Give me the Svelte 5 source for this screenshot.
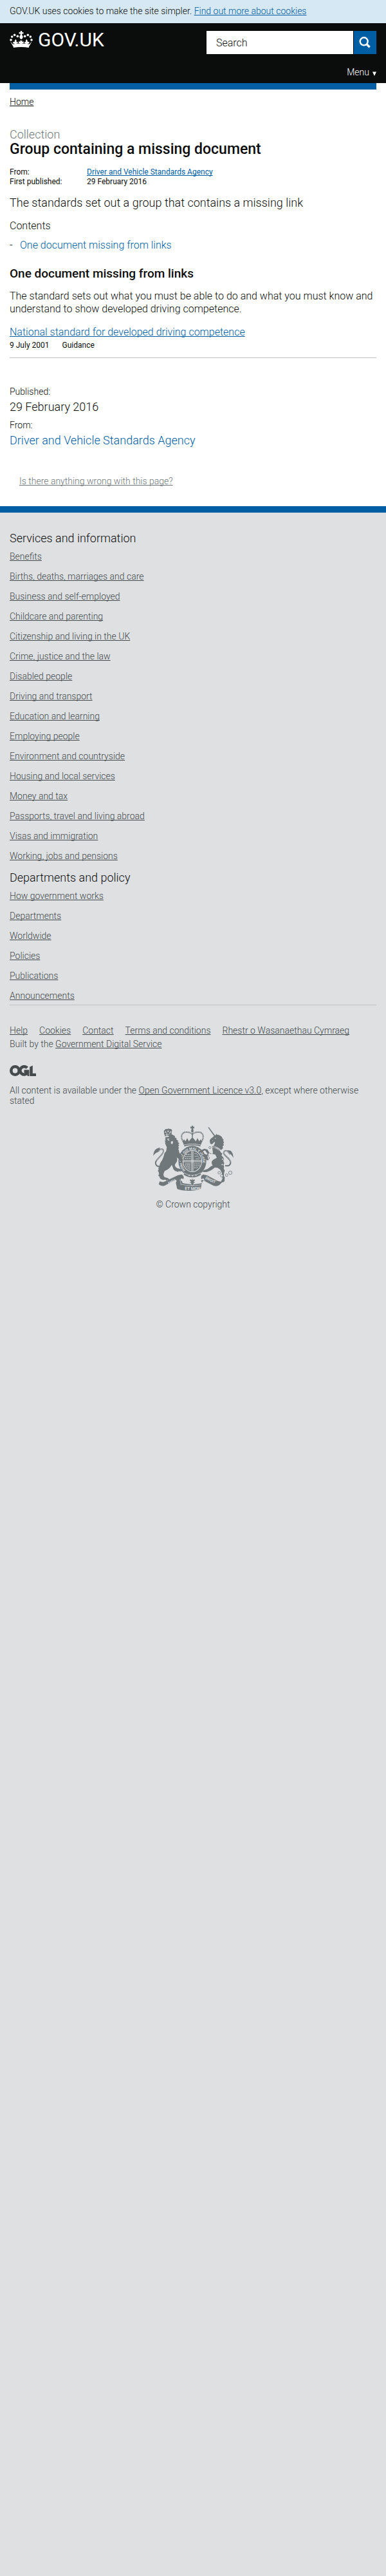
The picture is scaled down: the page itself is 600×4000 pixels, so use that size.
<script>
  const services = [
    'Benefits',
    'Births, deaths, marriages and care',
    'Business and self-employed',
    'Childcare and parenting',
    'Citizenship and living in the UK',
    'Crime, justice and the law',
    'Disabled people',
    'Driving and transport',
    'Education and learning',
    'Employing people',
    'Environment and countryside',
    'Housing and local services',
    'Money and tax',
    'Passports, travel and living abroad',
    'Visas and immigration',
    'Working, jobs and pensions'
  ];
  const departments = [
    'How government works',
    'Departments',
    'Worldwide',
    'Policies',
    'Publications',
    'Announcements'
  ];
  const meta = ['Help', 'Cookies', 'Contact', 'Terms and conditions', 'Rhestr o Wasanaethau Cymraeg'];
  let query = $state('');
</script>

<div class="cookies">
  <p>GOV.UK uses cookies to make the site simpler. <a href="#cookies">Find out more about cookies</a></p>
</div>

<header>
  <div class="bar">
    <a class="logo" href="#home">
      <svg class="crown" viewBox="45 144 108 78" aria-hidden="true">
        <g fill="#fff">
          <circle cx="51" cy="186" r="5.4" /><circle cx="56" cy="171" r="5.4" />
          <circle cx="68" cy="163" r="5.4" /><circle cx="82" cy="169" r="5.4" />
          <circle cx="147" cy="186" r="5.4" /><circle cx="142" cy="171" r="5.4" />
          <circle cx="130" cy="163" r="5.4" /><circle cx="116" cy="169" r="5.4" />
          <path d="M95 144h8l-1 7 7-2v9l-7-1 1 7c4 3 5 8 3 12l-4 6h-6l-4-6c-2-4-1-9 3-12l1-7-7 1v-9l7 2z" />
          <path d="M59 206c25-5 53-5 79 0l-4 16c-23-4-48-4-71 0z" />
          <path d="M48 193l7 7c3 4 6 7 10 8l-4 8zM149 193l-7 7c-3 4-6 7-10 8l4 8z" />
          <path d="M93 189h11l-2 6 8-2v9l-7-1 2 8H92l2-8-7 1v-9l8 2z" />
          <path d="M73 182l5 9-3 5 8-1-1 7-6 1 1 7h-9l1-7c-5 1-8-1-9-6l4-3 5 2-1-5zM124 182l-5 9 3 5-8-1 1 7 6 1-1 7h9l-1-7c5 1 8-1 9-6l-4-3-5 2 1-5z" />
        </g>
      </svg>
      <span>GOV.UK</span>
    </a>
    <form role="search" onsubmit={(e) => e.preventDefault()}>
      <input type="search" aria-label="Search" placeholder="Search" bind:value={query} />
      <button type="submit" aria-label="Search">
        <svg viewBox="0 0 35 36" aria-hidden="true">
          <circle cx="15.7" cy="16.3" r="6" fill="none" stroke="#fff" stroke-width="2.4" />
          <path d="M20 20.6l4.6 4.6" stroke="#fff" stroke-width="3.4" />
        </svg>
      </button>
    </form>
  </div>
  <a class="menu" href="#menu">Menu
    <svg viewBox="0 0 6 7" aria-hidden="true"><path d="M0 .5h6L3 7z" fill="#fff" /></svg>
  </a>
</header>

<main>
  <div class="stripe"></div>
  <nav aria-label="Breadcrumb"><a href="#home">Home</a></nav>

  <p class="kind">Collection</p>
  <h1>Group containing a missing document</h1>
  <dl class="facts">
    <dt>From:</dt>
    <dd><a href="#dvsa">Driver and Vehicle Standards Agency</a></dd>
    <dt>First published:</dt>
    <dd>29 February 2016</dd>
  </dl>
  <p class="lead">The standards set out a group that contains a missing link</p>

  <h2 class="contents">Contents</h2>
  <ul class="toc">
    <li><a href="#group">One document missing from links</a></li>
  </ul>

  <h2 class="group" id="group">One document missing from links</h2>
  <p class="body">The standard sets out what you must be able to do and what you must know and understand to show developed driving competence.</p>
  <div class="doc">
    <a href="#standard">National standard for developed driving competence</a>
    <p><span>9 July 2001</span><span>Guidance</span></p>
  </div>

  <dl class="published">
    <dt>Published:</dt>
    <dd>29 February 2016</dd>
    <dt>From:</dt>
    <dd><a href="#dvsa">Driver and Vehicle Standards Agency</a></dd>
  </dl>

  <p class="report"><a href="#report">Is there anything wrong with this page?</a></p>
</main>

<footer>
  <section class="links">
    <h2>Services and information</h2>
    <ul>
      {#each services as item}<li><a href="#services">{item}</a></li>{/each}
    </ul>
    <h2>Departments and policy</h2>
    <ul>
      {#each departments as item}<li><a href="#departments">{item}</a></li>{/each}
    </ul>
  </section>

  <ul class="meta">
    {#each meta as item}<li><a href="#meta">{item}</a></li>{/each}
  </ul>
  <p class="built">Built by the <a href="#gds">Government Digital Service</a></p>

  <svg class="ogl" viewBox="0 0 41 17" role="img" aria-label="Open Government Licence">
    <g fill="none" stroke="#454a4c" stroke-width="4.6">
      <circle cx="8.5" cy="8.5" r="6.2" />
      <path d="M27.2 4.3A6.2 6.2 0 1 0 28 11.2V9.6h-5.5" />
    </g>
    <path fill="#454a4c" d="M25.5 10h4.8v7h-2.4zM31.2 2.8L35.8.6v12.2H41V17h-9.8z" />
  </svg>
  <p class="licence">All content is available under the <a href="#ogl">Open Government Licence v3.0</a>, except where otherwise stated</p>

  <a class="copyright" href="#copyright">
    <svg viewBox="54 54 375 306" aria-hidden="true">
      <defs>
        <path id="ring" d="M206 263A48 55 0 1 1 268 263" />
        <path id="dieu" d="M122 331Q155 321 182 292" />
        <path id="mon" d="M186 351Q237 357 290 351" />
        <path id="droit" d="M290 295Q318 317 362 329" />
      </defs>
      <g fill="#6f777b">
        <!-- crown over the shield -->
        <path d="M233 54h8l-1 6 6-2v9l-6-1 2 9h-10l2-9-6 1v-9l6 2z" />
        <circle cx="237" cy="79" r="6" />
        <path d="M192 129l6-12 7 10 8-15 8 15 8-11 8-8 8 8 8 11 8-15 8 15 7-10 6 12-5 14c-24-7-56-7-80 0z" />
        <path d="M199 145c24-6 52-6 76 0v6c-24-7-52-7-76 0z" />
        <!-- shield -->
        <ellipse cx="237" cy="219" rx="65" ry="71" />
      </g>
      <g fill="none" stroke="#6f777b" stroke-width="6" stroke-dasharray="5 2">
        <path d="M194 128C180 106 187 85 206 84c14-1 24 3 29 9M280 128c14-22 7-43-12-44-14-1-24 3-29 9" />
        <path d="M237 86v34" />
      </g>
      <ellipse cx="237" cy="219" rx="45" ry="51" fill="#dee0e2" />
      <ellipse cx="237" cy="219" rx="42" ry="48" fill="#6f777b" />
      <g stroke="#dee0e2" fill="none" stroke-width="3">
        <path d="M234 172v94M240 172v94M195 216h84M195 222h84" />
        <path stroke-dasharray="7 3" d="M207 188h23M203 197h27M202 206h28M245 232h30M245 241h27M245 250h20" />
        <path d="M246 184h10l9 9M247 196h14l12 10M252 208h18" stroke-width="2" />
        <path d="M203 231h26M205 232c0 14 8 22 23 27M213 232v15M219 232v20M225 232v24" stroke-width="2" />
      </g>
      <g fill="#dee0e2" font-family="Roboto, sans-serif" font-weight="700">
        <text font-size="16"><textPath href="#ring" startOffset="2">HONI SOIT QUI MAL Y PENSE</textPath></text>
      </g>
      <path d="M200 274c22 15 50 15 74 0l5 8c-24 18-60 18-84 0z" fill="#6f777b" stroke="#dee0e2" stroke-width="2" />
      <g fill="#dee0e2"><circle cx="222" cy="285" r="3" /><circle cx="238" cy="287" r="3" /><circle cx="254" cy="284" r="3" /></g>

      <!-- lion -->
      <g fill="#6f777b">
        <path d="M107 106l3-5c10-7 22-9 34-6l4 3 8 4-1 6 9 5-2 5 10 7-4 4 9 7-6 4 5 6-5 5 4 8-4 3 3 7 2 10 5 8 8 5-5 4 6 6-2 5 8 8-7 1 4 8c-8-1-15-7-19-15l-10-7c4 10 3 18-4 26-5 6-6 12-1 18 4 5 12 8 20 9l9 3 2 9-9-3 2 6-9-5-3 4c-14-3-23-9-25-21l-5-12-8 12c-6 8-16 12-25 17l-4 9c-3 8-2 15 5 20l11 3 9 5-2 6-7-3-2 5-8-5-8 2c-10-2-18-6-18-15l-7-7 5-4-2-11-4-6 4-6-2-8 5-3c0-13 5-22 12-31 6-11 9-22 12-34l8-10 3-18-4-8-5-14 3 1-4-11 5 1-4-10 4 1-2-9 3-10-4-7 4-4c0-6-1-10-1-11z" />
        <path d="M55 194c0-15 5-27 15-33l15-6c2 10-2 18-10 23-9 2-14 8-20 16z" />
        <path d="M106 96l-2-19 6-5 3-3 8 1 4-3 6 2 8 1 3 6-2 20c-11-4-23-4-34 0z" />
      </g>
      <path d="M80 172c6-12 22-12 22 0 1 14-20 27-33 45-8 13-1 29 18 26" fill="none" stroke="#6f777b" stroke-width="6" />
      <path d="M80 172c6-12 22-12 22 0 1 14-20 27-33 45" fill="none" stroke="#dee0e2" stroke-width="1.6" />
      <g fill="#dee0e2">
        <path d="M109 104l11-5 10 4-5 3-9 1zM131 113l-6 5 7 6-9-2-3-7zM137 128l8-3 2 7-4 9-6-5z" />
        <circle cx="112" cy="83" r="3" /><circle cx="124" cy="80" r="3.2" /><circle cx="136" cy="83" r="3" />
        <path d="M113 90l5-4 3 4zM127 89l4-4 4 5z" />
      </g>

      <!-- unicorn -->
      <g fill="#6f777b">
        <path d="M310 62l4-1 28 37 2 8-6-4z" />
        <path d="M334 105l14-9-1-5 6 5c15 2 23 9 25 19l6 5-4 4 5 8-4 5 3 8-6 5 2 8-9 11-6-5c-10-9-20-11-28-10l-3-5 6-9 3-10-6 1-5 7c-3 4-9 3-12-2l-2-10c0-8 5-12 13-17z" />
        <path d="M329 148l34 18 8 14 6 3-4 10 8 8 3 10-3 6 5 13-4 4 3 11-2 9 5 8-3 12-1 15 4 5-1 18c-5 7-12 7-16 0l6-10-3-29-7-14-13-9-13-1c-11 11-26 18-39 21l-18-1 5-7 20-7 15-12 8-4c-9-12-5-24 7-29l12-7-7-15c-12-1-20-3-26-8l-8 7 5 6-9 2 8 11-3 9-9-1-3-9-14-9-2-8 8 1 3-4 9 4 5-3-4-6-8-11-11 5-5 8-5-6 4-9 14-6 15 4 6 11 7 10 12-2z" />
        <path d="M428 204c0-15-4-28-14-34l-12-2c0 9 4 14 9 18 7 1 12 8 17 18z" />
      </g>
      <path d="M412 187c-10-22-28-20-29-7-1 14 31 25 32 44 1 15-11 19-25 16" fill="none" stroke="#6f777b" stroke-width="6" />
      <path d="M412 187c-10-22-28-20-29-7-1 14 31 25 32 44" fill="none" stroke="#dee0e2" stroke-width="1.6" />
      <g fill="#dee0e2" stroke="#6f777b" stroke-width="2.4">
        <circle cx="319" cy="156" r="5" /><circle cx="312" cy="204" r="5" /><circle cx="379" cy="210" r="4.5" />
        <circle cx="376" cy="235" r="4" /><circle cx="362" cy="273" r="6" /><circle cx="374" cy="287" r="6" />
        <circle cx="397" cy="284" r="6" /><circle cx="414" cy="273" r="8" />
      </g>
      <path d="M330 147c14 3 28 10 42 20M328 154c14 2 26 9 40 19" fill="none" stroke="#dee0e2" stroke-width="2.5" stroke-dasharray="5 2" />
      <path d="M340 113l8-3-3 5zM330 122l4 2-3 2z" fill="#dee0e2" />

      <!-- motto scroll -->
      <g fill="#6f777b">
        <path d="M85 313c11 5 21 4 32-3l52-25 17-4c10 4 13 12 9 22l-8-4c-7 2-5 12 1 13l4 9c22 7 68 7 90 0l4-9c6-1 8-11 1-13l-8 4c-4-10-1-18 9-22l17 4 47 25c10 5 19 5 29 2l-17 17c-12 8-24 8-35 1l-46-24-6 4 5 9-6 29c-22 12-88 12-110 0l-6-28 4-10-5-4-44 23c-12 8-24 7-35-2z" />
        <path d="M231 333v-12h-6v-5h6l-7-8c3-5 8-5 10-1l3-10 3 10c2-4 7-4 10 1l-7 8h6v5h-6v12z" stroke="#dee0e2" stroke-width="1.5" />
      </g>
      <g fill="none" stroke="#dee0e2" stroke-width="2">
        <path d="M184 326c30 9 76 9 106 0M178 305c4 10 6 17 6 26M296 305c-5 10-6 17-6 26" />
      </g>
      <g fill="#dee0e2" font-family="Roboto, sans-serif" font-weight="700">
        <text font-size="18"><textPath href="#dieu" startOffset="5">DIEU</textPath></text>
        <text font-size="20"><textPath href="#mon" startOffset="16">ET MON</textPath></text>
        <text font-size="18"><textPath href="#droit" startOffset="8">DROIT</textPath></text>
      </g>
    </svg>
    <span>© Crown copyright</span>
  </a>
</footer>

<style>
  :global(body) {
    margin: 0;
    background: #dee0e2;
  }
  :global(#app) {
    font-family: Roboto, "Liberation Sans", sans-serif;
    font-weight: 300;
    color: #0b0c0c;
    font-size: 14px;
    line-height: 20px;
  }
  p, h1, h2, ul, dl, dd {
    margin: 0;
    padding: 0;
  }
  h2 { font-weight: 300; }
  ul { list-style: none; }
  a {
    color: #005ea5;
    text-decoration: underline;
    text-decoration-skip-ink: none;
  }

  .cookies {
    padding: 7px 15px 9px;
    background: #d5e8f3;
  }

  header {
    background: #0b0c0c;
    padding: 12px 15px 7px;
    display: flex;
    flex-direction: column;
    gap: 18px;
  }
  .bar {
    display: flex;
    justify-content: space-between;
    align-items: flex-start;
  }
  .logo {
    display: flex;
    gap: 8px;
    color: #fff;
    text-decoration: none;
    font-size: 30px;
    font-weight: 400;
    line-height: 28px;
  }
  .crown {
    width: 36px;
    height: 26px;
  }
  form {
    display: flex;
    gap: 1px;
    width: 264px;
  }
  input {
    flex: 1;
    min-width: 0;
    box-sizing: border-box;
    height: 36px;
    margin: 0;
    padding: 0 15px;
    border: 0;
    border-radius: 0;
    background: #fff;
    color: #0b0c0c;
    font: 300 16px Roboto, sans-serif;
    appearance: none;
  }
  input::placeholder { color: #0b0c0c; }
  button {
    width: 35px;
    height: 36px;
    padding: 0;
    border: 0;
    background: #005ea5;
  }
  button svg {
    display: block;
    width: 35px;
    height: 36px;
  }
  .menu {
    align-self: flex-end;
    display: flex;
    align-items: center;
    gap: 5px;
    color: #fff;
    text-decoration: none;
  }
  .menu svg {
    width: 6px;
    height: 7px;
    margin-top: 4px;
  }

  main {
    background: #fff;
    padding: 0 15px 29px;
  }
  .stripe {
    height: 10px;
    background: #005ea5;
  }
  nav { margin-top: 9px; }
  nav a { color: #0b0c0c; }
  .kind {
    margin-top: 31px;
    font-size: 18px;
    color: #6f777b;
  }
  h1 {
    font-size: 23px;
    line-height: 26px;
    font-weight: 500;
  }
  .facts {
    display: grid;
    grid-template-columns: 120px 1fr;
    margin-top: 15px;
    font-size: 12px;
    font-weight: 400;
    line-height: 15px;
  }
  .lead {
    margin-top: 15px;
    font-size: 18px;
  }
  .contents {
    margin-top: 16px;
    font-size: 16px;
  }
  .toc {
    margin-top: 10px;
    font-size: 16px;
  }
  .toc li { display: flex; }
  .toc li::before {
    content: "-";
    width: 16px;
  }
  .toc a { text-decoration: none; }
  .group {
    margin-top: 24px;
    font-size: 19px;
    font-weight: 500;
  }
  .body {
    margin-top: 15px;
    font-size: 16px;
  }
  .doc {
    margin-top: 16px;
    padding-bottom: 11px;
    border-bottom: 1px solid #bfc1c3;
    font-size: 16px;
  }
  .doc p {
    display: flex;
    gap: 20px;
    margin-top: 3px;
    font-size: 12px;
    font-weight: 400;
    line-height: 15px;
  }
  .published { margin-top: 42px; }
  .published dd {
    margin: 4px 0 8px;
    font-size: 18px;
  }
  .published a { text-decoration: none; }
  .report {
    margin-top: 43px;
    padding-left: 15px;
  }
  .report a { color: #6f777b; }

  footer {
    border-top: 10px solid #005ea5;
    padding: 30px 15px 60px;
    background: #dee0e2;
    color: #454a4c;
  }
  footer a { color: #454a4c; }
  .links {
    padding-bottom: 4px;
    border-bottom: 1px solid #bfc1c3;
  }
  .links h2 {
    font-size: 18px;
    color: #0b0c0c;
  }
  .links ul {
    display: grid;
    gap: 11px;
    margin-top: 8px;
  }
  .links ul + h2 { margin-top: 14px; }
  .meta {
    display: flex;
    flex-wrap: wrap;
    column-gap: 18px;
    margin-top: 29px;
  }
  .built { margin-top: 1px; }
  .ogl {
    display: block;
    width: 41px;
    height: 17px;
    margin-top: 23px;
  }
  .licence {
    margin-top: 14px;
    line-height: 16px;
  }
  .copyright {
    display: flex;
    flex-direction: column;
    align-items: center;
    gap: 10px;
    margin-top: 31px;
    text-decoration: none;
  }
  .copyright svg {
    width: 125px;
    height: 102px;
  }
</style>
